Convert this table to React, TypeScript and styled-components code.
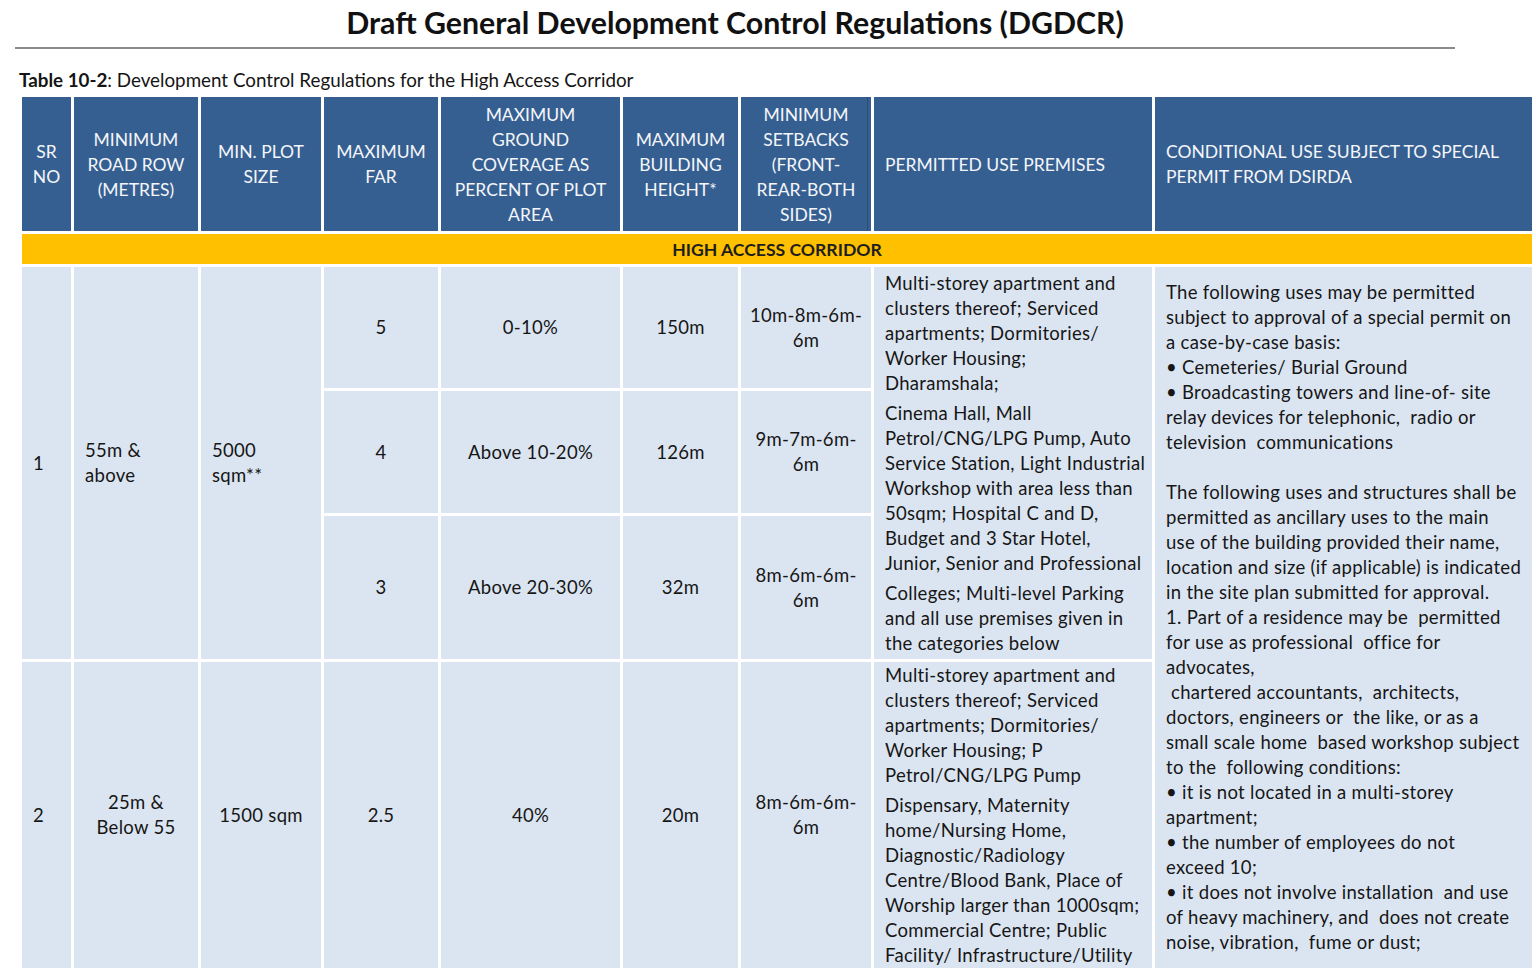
import React from 'react'
import styled, { createGlobalStyle } from 'styled-components'

const GlobalStyle = createGlobalStyle`
  html, body {
    margin: 0;
    padding: 0;
    background: #ffffff;
  }
  body {
    font-family: Lato, "Liberation Sans", sans-serif;
    color: #151515;
  }
`

type Align = 'left' | 'center'
type Tone = 'head' | 'band' | 'body'

const header: { lines: string[]; align: Align; edge?: boolean }[] = [
  { lines: ['SR', 'NO'], align: 'center' },
  { lines: ['MINIMUM', 'ROAD ROW', '(METRES)'], align: 'center' },
  { lines: ['MIN. PLOT', 'SIZE'], align: 'center' },
  { lines: ['MAXIMUM', 'FAR'], align: 'center' },
  { lines: ['MAXIMUM', 'GROUND', 'COVERAGE AS', 'PERCENT OF PLOT', 'AREA'], align: 'center' },
  { lines: ['MAXIMUM', 'BUILDING', 'HEIGHT*'], align: 'center' },
  { lines: ['MINIMUM', 'SETBACKS', '(FRONT-', 'REAR-BOTH', 'SIDES)'], align: 'center', edge: true },
  { lines: ['PERMITTED USE PREMISES'], align: 'left' },
  { lines: ['CONDITIONAL USE SUBJECT TO SPECIAL', 'PERMIT FROM DSIRDA'], align: 'left' },
]

const tiers = [
  { far: '5', cover: '0-10%', height: '150m', setback: ['10m-8m-6m-', '6m'] },
  { far: '4', cover: 'Above 10-20%', height: '126m', setback: ['9m-7m-6m-', '6m'] },
  { far: '3', cover: 'Above 20-30%', height: '32m', setback: ['8m-6m-6m-', '6m'] },
]

const permittedOne = [
  ['Multi-storey apartment and', 'clusters thereof; Serviced', 'apartments; Dormitories/', 'Worker Housing;', 'Dharamshala;'],
  [
    'Cinema Hall, Mall',
    'Petrol/CNG/LPG Pump, Auto',
    'Service Station, Light Industrial',
    'Workshop with area less than',
    '50sqm; Hospital C and D,',
    'Budget and 3 Star Hotel,',
    'Junior, Senior and Professional',
  ],
  ['Colleges; Multi-level Parking', 'and all use premises given in', 'the categories below'],
]

const permittedTwo = [
  ['Multi-storey apartment and', 'clusters thereof; Serviced', 'apartments; Dormitories/', 'Worker Housing; P', 'Petrol/CNG/LPG Pump'],
  [
    'Dispensary, Maternity',
    'home/Nursing Home,',
    'Diagnostic/Radiology',
    'Centre/Blood Bank, Place of',
    'Worship larger than 1000sqm;',
    'Commercial Centre; Public',
    'Facility/ Infrastructure/Utility',
  ],
]

const conditional = [
  'The following uses may be permitted',
  'subject to approval of a special permit on',
  'a case-by-case basis:',
  '\u2022 Cemeteries/ Burial Ground',
  '\u2022 Broadcasting towers and line-of- site',
  'relay devices for telephonic,  radio or',
  'television  communications',
  '',
  'The following uses and structures shall be',
  'permitted as ancillary uses to the main',
  'use of the building provided their name,',
  'location and size (if applicable) is indicated',
  'in the site plan submitted for approval.',
  '1. Part of a residence may be  permitted',
  'for use as professional  office for',
  'advocates,',
  ' chartered accountants,  architects,',
  'doctors, engineers or  the like, or as a',
  'small scale home  based workshop subject',
  'to the  following conditions:',
  '\u2022 it is not located in a multi-storey',
  'apartment;',
  '\u2022 the number of employees do not',
  'exceed 10;',
  '\u2022 it does not involve installation  and use',
  'of heavy machinery, and  does not create',
  'noise, vibration,  fume or dust;',
]

const Lines = ({ lines }: { lines: string[] }) => (
  <>
    {lines.map((l, i) => (
      <Line key={i}>{l || '\u00a0'}</Line>
    ))}
  </>
)

const App = () => {
  return (
    <Page>
      <GlobalStyle />
      <TitleBar>
        <Title>Draft General Development Control Regulations (DGDCR)</Title>
      </TitleBar>
      <Caption>
        <b>Table 10-2</b>: Development Control Regulations for the High Access Corridor
      </Caption>

      <Table>
        {header.map((h, i) => (
          <Cell key={i} $tone="head" $align={h.align} $col={i + 1} $row={1} $edge={h.edge}>
            <div>
              <Lines lines={h.lines} />
            </div>
          </Cell>
        ))}

        <Cell $tone="band" $align="center" $col={1} $colSpan={9} $row={2}>
          <Band>HIGH ACCESS CORRIDOR</Band>
        </Cell>

        <Cell $tone="body" $align="left" $col={1} $row={3} $rowSpan={3}>
          <div>
            <Lines lines={['1']} />
          </div>
        </Cell>
        <Cell $tone="body" $align="left" $col={2} $row={3} $rowSpan={3}>
          <div>
            <Lines lines={['55m &', 'above']} />
          </div>
        </Cell>
        <Cell $tone="body" $align="left" $col={3} $row={3} $rowSpan={3}>
          <div>
            <Lines lines={['5000', 'sqm**']} />
          </div>
        </Cell>

        {tiers.map((t, i) => (
          <React.Fragment key={i}>
            <Cell $tone="body" $align="center" $col={4} $row={3 + i}>
              <div>
                <Lines lines={[t.far]} />
              </div>
            </Cell>
            <Cell $tone="body" $align="center" $col={5} $row={3 + i}>
              <div>
                <Lines lines={[t.cover]} />
              </div>
            </Cell>
            <Cell $tone="body" $align="center" $col={6} $row={3 + i}>
              <div>
                <Lines lines={[t.height]} />
              </div>
            </Cell>
            <Cell $tone="body" $align="center" $col={7} $row={3 + i}>
              <div>
                <Lines lines={t.setback} />
              </div>
            </Cell>
          </React.Fragment>
        ))}

        <Cell $tone="body" $align="left" $col={8} $row={3} $rowSpan={3}>
          <div>
            {permittedOne.map((p, i) => (
              <Para key={i}>
                <Lines lines={p} />
              </Para>
            ))}
          </div>
        </Cell>

        <Cell $tone="body" $align="left" $col={9} $row={3} $rowSpan={4}>
          <div>
            <Lines lines={conditional} />
          </div>
        </Cell>

        <Cell $tone="body" $align="left" $col={1} $row={6}>
          <div>
            <Lines lines={['2']} />
          </div>
        </Cell>
        <Cell $tone="body" $align="center" $col={2} $row={6}>
          <div>
            <Lines lines={['25m &', 'Below 55']} />
          </div>
        </Cell>
        {['1500 sqm', '2.5', '40%', '20m'].map((v, i) => (
          <Cell key={v} $tone="body" $align="center" $col={3 + i} $row={6}>
            <div>
              <Lines lines={[v]} />
            </div>
          </Cell>
        ))}
        <Cell $tone="body" $align="center" $col={7} $row={6}>
          <div>
            <Lines lines={['8m-6m-6m-', '6m']} />
          </div>
        </Cell>
        <Cell $tone="body" $align="left" $col={8} $row={6}>
          <div>
            {permittedTwo.map((p, i) => (
              <Para key={i}>
                <Lines lines={p} />
              </Para>
            ))}
          </div>
        </Cell>
      </Table>
    </Page>
  )
}

export default App

const Page = styled.div`
  width: 1536px;
  height: 973px;
  overflow: hidden;
  padding-top: 3px;
  box-sizing: border-box;
`

const TitleBar = styled.div`
  margin-left: 15px;
  width: 1440px;
  border-bottom: 2px solid #8a8a8a;
  padding-bottom: 6px;
`

const Title = styled.h1`
  margin: 0;
  text-align: center;
  font-size: 30.3px;
  line-height: 38px;
  font-weight: 700;
  color: #111111;
`

const Caption = styled.div`
  margin: 19px 0 5px 19px;
  font-size: 18.8px;
  line-height: 24px;
  height: 24px;
  color: #151515;
  white-space: nowrap;

  b {
    font-weight: 700;
  }
`

const Table = styled.div`
  margin-left: 22px;
  width: 1510px;
  display: grid;
  grid-template-columns: 49px 124px 120px 114px 179px 115px 130px 278px 377px;
  grid-template-rows: 134px 30px 121px 122px 143px 306px;
  gap: 3px;
  background: #ffffff;
`

const Cell = styled.div<{
  $tone: Tone
  $align: Align
  $col: number
  $row: number
  $colSpan?: number
  $rowSpan?: number
  $edge?: boolean
}>`
  grid-column: ${(p) => `${p.$col} / span ${p.$colSpan ?? 1}`};
  grid-row: ${(p) => `${p.$row} / span ${p.$rowSpan ?? 1}`};
  display: flex;
  align-items: center;
  justify-content: ${(p) => (p.$align === 'center' ? 'center' : 'flex-start')};
  text-align: ${(p) => p.$align};
  padding: ${(p) => (p.$align === 'center' ? '0 2px' : '0 4px 0 11px')};
  overflow: hidden;
  font-size: ${(p) => (p.$tone === 'head' ? '17.5px' : '18.5px')};
  letter-spacing: ${(p) => (p.$tone === 'head' ? '0' : '0.3px')};
  background: ${(p) => (p.$tone === 'head' ? '#365f91' : p.$tone === 'band' ? '#ffc000' : '#dbe5f1')};
  color: ${(p) => (p.$tone === 'head' ? '#f4f6fa' : '#161616')};
  box-shadow: ${(p) => (p.$edge ? 'inset -3px 0 0 #365f91, inset -4px 0 0 #2b4e7a' : 'none')};
`

const Line = styled.div`
  white-space: pre;
  line-height: 25px;
`

const Para = styled.div`
  & + & {
    margin-top: 5px;
  }
`

const Band = styled.div`
  font-weight: 700;
  font-size: 17.6px;
  letter-spacing: 0;
  line-height: 25px;
  color: #1e1e1e;
`
